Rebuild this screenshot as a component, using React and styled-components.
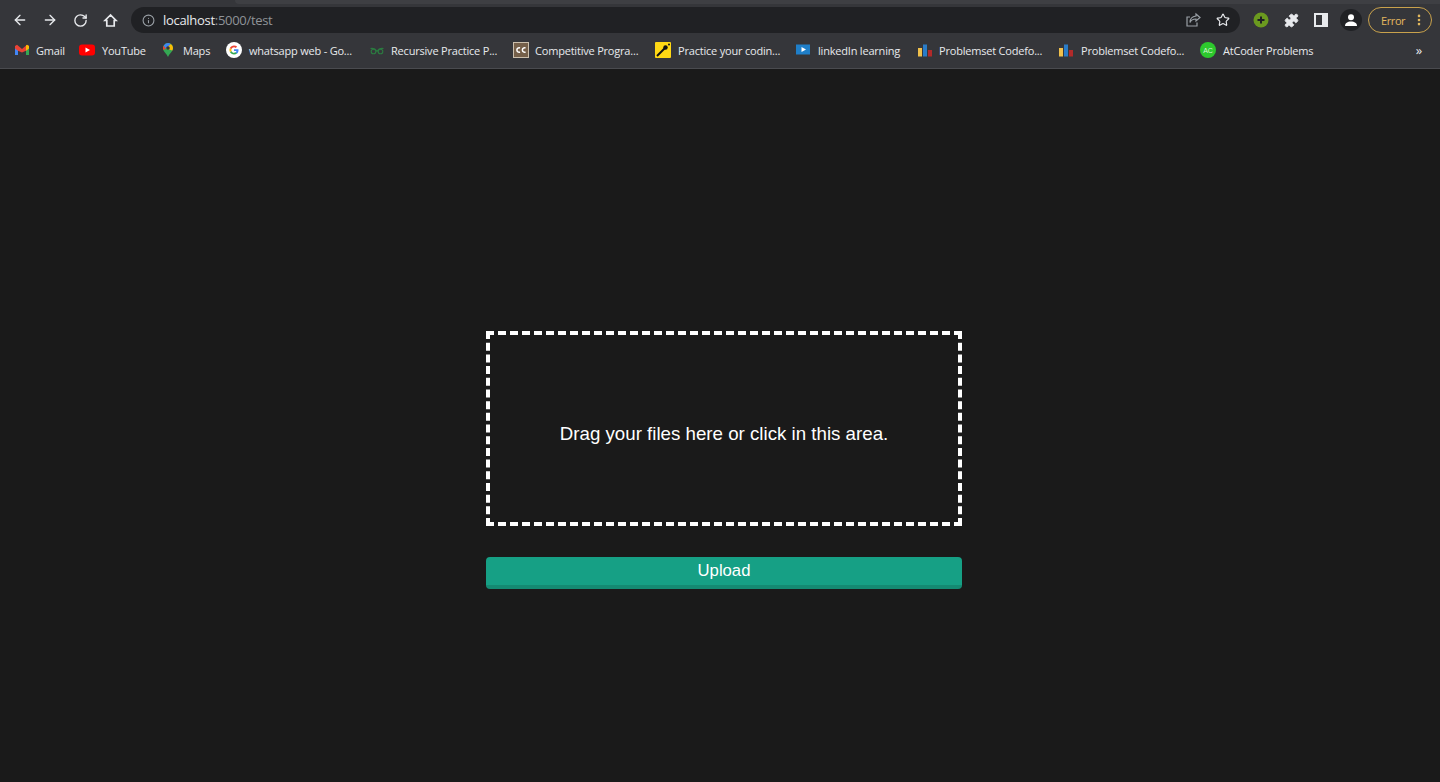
import styled, { createGlobalStyle } from 'styled-components';
import { ArrowLeft, ArrowRight, RotateCw, Info, Star, Puzzle, MoreVertical } from 'lucide-react';

const Global = createGlobalStyle`
    html, body { margin: 0; padding: 0; background: #1a1a1a; }
    #root { min-height: 782px; }
`

const Page = styled.div`
    height: 782px;
    display: flex;
    flex-direction: column;
    background: #1a1a1a;
    overflow: hidden;
`

const Chrome = styled.header`
    height: 69px;
    flex-shrink: 0;
    box-sizing: border-box;
    background: #35363a;
    border-bottom: 1px solid #4a4b4f;
    font-family: "Open Sans", "Noto Sans", sans-serif;
    color: #e8eaed;
`

const TabEdge = styled.div`
    height: 7px;
    padding-left: 235px;
`

const TabStrip = styled.div`
    height: 4px;
    background: #3e3f43;
    border-bottom-left-radius: 4px;
`

const Toolbar = styled.div`
    height: 26px;
    display: flex;
    align-items: center;
    padding: 0 8px 0 5px;
`

const NavButton = styled.span`
    width: 30px;
    height: 26px;
    display: flex;
    align-items: center;
    justify-content: center;
    color: #e8eaed;
`

const UrlBar = styled.div`
    flex: 1;
    height: 26px;
    margin-left: 6px;
    display: flex;
    align-items: center;
    padding: 0 2px 0 11px;
    border-radius: 13px;
    background: #202124;
    font-size: 13px;
`

const UrlText = styled.span`
    margin-left: 8px;
    flex: 1;
    letter-spacing: -0.3px;
    color: #e8eaed;
`

const UrlMuted = styled.span`
    color: #8f9398;
`

const UrlAction = styled.span`
    width: 30px;
    height: 26px;
    display: flex;
    align-items: center;
    justify-content: center;
    color: ${(p) => p.$color || '#e8eaed'};
`

const Actions = styled.div`
    display: flex;
    align-items: center;
    margin-left: 6px;
`

const Avatar = styled.span`
    width: 22px;
    height: 22px;
    margin: 0 4px 0 4px;
    border-radius: 50%;
    background: #202124;
    display: flex;
    align-items: center;
    justify-content: center;
`

const ErrorChip = styled.div`
    width: 64px;
    height: 26px;
    box-sizing: border-box;
    margin-left: 2px;
    padding: 0 5px 0 12px;
    border: 1.5px solid #c9a24c;
    border-radius: 13px;
    display: flex;
    align-items: center;
    justify-content: space-between;
    font-size: 11px;
    letter-spacing: -0.4px;
    color: #e3b85e;
`

const Bookmarks = styled.nav`
    height: 26px;
    margin-top: 4px;
    padding: 0 18px 0 14px;
    display: flex;
    align-items: center;
    font-size: 11px;
    letter-spacing: -0.2px;
`

const Bookmark = styled.div`
    width: ${(p) => p.$w}px;
    flex-shrink: 0;
    display: flex;
    align-items: center;
    gap: ${(p) => p.$gap || 7}px;
    white-space: nowrap;
`

const Fav = styled.svg`
    width: 16px;
    height: 16px;
    flex-shrink: 0;
`

const More = styled.span`
    margin-left: auto;
    font-size: 13px;
    color: #e8eaed;
`

const Main = styled.main`
    flex: 1;
    padding-top: 262px;
    display: flex;
    flex-direction: column;
    align-items: center;
    font-family: "Liberation Sans", Arial, sans-serif;
`

const Form = styled.form`
    width: 476px;
    margin-left: 8px;
`

const Drop = styled.div`
    height: 195px;
    box-sizing: border-box;
    padding-top: 10px;
    border: 4px dashed #fff;
    display: flex;
    align-items: center;
    justify-content: center;
    color: #fff;
    font-size: 18.72px;
`

const UploadButton = styled.button`
    display: block;
    width: 100%;
    height: 32px;
    margin-top: 31px;
    padding: 0;
    border: none;
    border-bottom: 4px solid #148a72;
    border-radius: 4px;
    background: #16a085;
    color: #fff;
    font-family: inherit;
    font-size: 16.7px;
`

const Gmail = () => (
    <Fav viewBox="0 0 16 16">
        <path d="M1 4v9h3V6.500z" fill="#4285f4" />
        <path d="M15 4v9h-3V6.500z" fill="#34a853" />
        <path d="M1 4l2-1.200L8 7l5-4.200L15 4v2.500l-3 2.200L8 10.500 4 8.700 1 6.500z" fill="#ea4335" />
        <path d="M12 3.500l1-.7L15 4v2.500l-3 2.200z" fill="#fbbc04" />
    </Fav>
)

const Youtube = () => (
    <Fav viewBox="0 0 16 16">
        <rect x="0" y="2.500" width="16" height="11" rx="3" fill="#f00" />
        <path d="M6.500 5.500v5L11 8z" fill="#fff" />
    </Fav>
)

const Maps = () => (
    <Fav viewBox="0 0 16 16">
        <path d="M8 1a5 5 0 0 0-5 5c0 3.500 3.500 5.500 5 9 1.500-3.500 5-5.500 5-9a5 5 0 0 0-5-5z" fill="#34a853" />
        <path d="M3.600 3.800L6 6.500 3.500 8C3.100 7.300 3 6.700 3 6c0-.8.200-1.600.600-2.200z" fill="#ea4335" />
        <path d="M3.700 3.700A5 5 0 0 1 8 1c1 0 2 .3 2.800 .9L6 6.500z" fill="#4285f4" />
        <path d="M10.800 1.900A5 5 0 0 1 13 6c0 1-.3 1.800-.7 2.500L6 6.500z" fill="#fbbc04" />
        <circle cx="8" cy="6" r="1.800" fill="#35363a" />
    </Fav>
)

const Google = () => (
    <Fav viewBox="0 0 16 16">
        <circle cx="8" cy="8" r="8" fill="#fff" />
        <path d="M12.500 8.200c0-.4 0-.7-.1-1H8v1.900h2.500c-.1.600-.5 1.100-1 1.400l1.500 1.200c.9-.8 1.500-2 1.500-3.500z" fill="#4285f4" />
        <path d="M8 12.600c1.200 0 2.200-.4 3-1.100l-1.500-1.200c-.4.300-1 .5-1.500.5-1.200 0-2.200-.8-2.500-1.900L3.900 10.100c.8 1.500 2.300 2.500 4.100 2.500z" fill="#34a853" />
        <path d="M5.500 8.900a2.800 2.800 0 0 1 0-1.800L3.900 5.900a4.600 4.600 0 0 0 0 4.200z" fill="#fbbc04" />
        <path d="M8 5.200c.7 0 1.300.2 1.800.7l1.300-1.300C10.300 3.800 9.200 3.400 8 3.400 6.200 3.400 4.700 4.400 3.900 5.900l1.600 1.200C5.800 6 6.800 5.200 8 5.200z" fill="#ea4335" />
    </Fav>
)

const Geeks = () => (
    <Fav viewBox="0 0 16 16">
        <g fill="none" stroke="#2b7a40" strokeWidth="1.100">
            <circle cx="4.500" cy="9.500" r="2.300" />
            <circle cx="11.500" cy="9.500" r="2.300" />
            <path d="M1.500 6.500C4 6 6.500 7 8 9.500 9.500 7 12 6 14.500 6.500" />
        </g>
    </Fav>
)

const CodeChef = () => (
    <Fav viewBox="0 0 16 16">
        <rect x="0.500" y="0.500" width="15" height="15" fill="#75604a" stroke="#cbbfac" />
        <path d="M7 6a2.200 2.200 0 1 0 0 4M12.500 6a2.200 2.200 0 1 0 0 4" fill="none" stroke="#fff" strokeWidth="1.500" />
    </Fav>
)

const Practice = () => (
    <Fav viewBox="0 0 16 16">
        <rect width="16" height="16" rx="1" fill="#ffd814" />
        <path d="M2 14l8-8" stroke="#111" strokeWidth="2" />
        <circle cx="10.500" cy="5.500" r="2.200" fill="#111" />
        <circle cx="14" cy="2.500" r="1" fill="#111" />
    </Fav>
)

const Linkedin = () => (
    <Fav viewBox="0 0 16 16">
        <rect y="2.500" width="14" height="10" fill="#1f7fc9" />
        <path d="M5.500 5v5L10 7.500z" fill="#fff" />
    </Fav>
)

const Bars = () => (
    <Fav viewBox="0 0 16 16">
        <rect x="1" y="6" width="4" height="8.500" fill="#f0c04b" />
        <rect x="6" y="2.500" width="4" height="12" fill="#2a7cc7" />
        <rect x="11" y="8" width="4" height="6.500" fill="#b22a2a" />
    </Fav>
)

const AtCoder = () => (
    <Fav viewBox="0 0 16 16">
        <circle cx="8" cy="8" r="8" fill="#2dc82d" />
        <text x="8" y="10.500" textAnchor="middle" fontSize="7" fill="#d8f5d8" fontFamily="Liberation Sans">AC</text>
    </Fav>
)

const marks = [
    { icon: <Gmail />, label: 'Gmail', w: 65, gap: 6 },
    { icon: <Youtube />, label: 'YouTube', w: 81, gap: 7 },
    { icon: <Maps />, label: 'Maps', w: 66, gap: 7 },
    { icon: <Google />, label: 'whatsapp web - Go...', w: 143, gap: 7 },
    { icon: <Geeks />, label: 'Recursive Practice P...', w: 144, gap: 6 },
    { icon: <CodeChef />, label: 'Competitive Progra...', w: 142, gap: 6 },
    { icon: <Practice />, label: 'Practice your codin...', w: 141, gap: 7 },
    { icon: <Linkedin />, label: 'linkedIn learning', w: 121, gap: 6 },
    { icon: <Bars />, label: 'Problemset Codefo...', w: 141, gap: 6 },
    { icon: <Bars />, label: 'Problemset Codefo...', w: 142, gap: 7 },
    { icon: <AtCoder />, label: 'AtCoder Problems', w: 130, gap: 7 },
]

function App() {
    return (
        <Page>
            <Global />
            <Chrome>
                <TabEdge><TabStrip /></TabEdge>
                <Toolbar>
                    <NavButton><ArrowLeft size={16} strokeWidth={2} /></NavButton>
                    <NavButton><ArrowRight size={16} strokeWidth={2} /></NavButton>
                    <NavButton><RotateCw size={15} strokeWidth={2.200} /></NavButton>
                    <NavButton>
                        <svg width="15" height="15" viewBox="0 0 15 15" fill="none" stroke="currentColor" strokeWidth="1.700">
                            <path d="M7.500 2L2 7.500h1.800V13h7.400V7.500H13z" strokeLinejoin="miter" />
                        </svg>
                    </NavButton>
                    <UrlBar>
                        <Info size={13} color="#9aa0a6" strokeWidth={2} />
                        <UrlText>localhost<UrlMuted>:5000/test</UrlMuted></UrlText>
                        <UrlAction $color="#9aa0a6">
                            <svg width="16" height="16" viewBox="0 0 16 16" fill="none" stroke="currentColor" strokeWidth="1.200">
                                <path d="M11 2l4 3.500L11 9V7C8 7 6 8 5 10.500 5 7 7 4.500 11 4z" />
                                <path d="M12 10.500V14H2V5h3" />
                            </svg>
                        </UrlAction>
                        <UrlAction><Star size={14} strokeWidth={2} /></UrlAction>
                    </UrlBar>
                    <Actions>
                        <UrlAction>
                            <svg width="16" height="16" viewBox="0 0 16 16">
                                <circle cx="8" cy="8" r="7.500" fill="#6b9a1f" />
                                <path d="M8 4.500v7M4.500 8h7" stroke="#202124" strokeWidth="2" />
                            </svg>
                        </UrlAction>
                        <UrlAction><Puzzle size={15} fill="#e8eaed" strokeWidth={1.500} /></UrlAction>
                        <UrlAction>
                            <svg width="14" height="14" viewBox="0 0 14 14">
                                <path d="M1 1h12v12H1z" fill="none" stroke="#e8eaed" strokeWidth="2" />
                                <path d="M8 1h5v12H8z" fill="#e8eaed" />
                            </svg>
                        </UrlAction>
                        <Avatar>
                            <svg width="14" height="14" viewBox="0 0 14 14" fill="#fff">
                                <circle cx="7" cy="4.200" r="3" />
                                <path d="M1 13c0-3 2.500-4.500 6-4.500s6 1.500 6 4.500z" />
                            </svg>
                        </Avatar>
                        <ErrorChip>Error<MoreVertical size={14} strokeWidth={2.500} /></ErrorChip>
                    </Actions>
                </Toolbar>
                <Bookmarks>
                    {marks.map((m, i) => (
                        <Bookmark key={i} $w={m.w} $gap={m.gap}>{m.icon}{m.label}</Bookmark>
                    ))}
                    <More>»</More>
                </Bookmarks>
            </Chrome>
            <Main>
                <Form>
                    <Drop>Drag your files here or click in this area.</Drop>
                    <UploadButton type="button">Upload</UploadButton>
                </Form>
            </Main>
        </Page>
    )
}

export default App
